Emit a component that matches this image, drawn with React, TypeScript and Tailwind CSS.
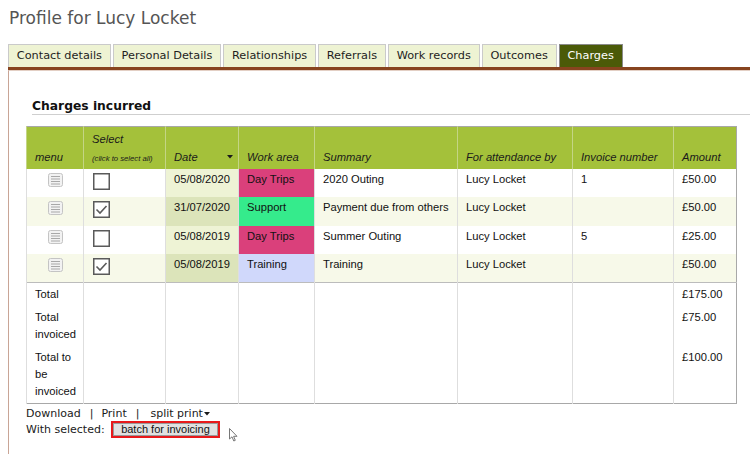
import React from "react";

const tabs = [
  "Contact details",
  "Personal Details",
  "Relationships",
  "Referrals",
  "Work records",
  "Outcomes",
  "Charges",
];

type Row = {
  date: string;
  area: string;
  areaBg: string;
  summary: string;
  by: string;
  inv: string;
  amount: string;
  checked: boolean;
};

const rows: Row[] = [
  { date: "05/08/2020", area: "Day Trips", areaBg: "bg-[#da407b]", summary: "2020 Outing", by: "Lucy Locket", inv: "1", amount: "£50.00", checked: false },
  { date: "31/07/2020", area: "Support", areaBg: "bg-[#35eb8c]", summary: "Payment due from others", by: "Lucy Locket", inv: "", amount: "£50.00", checked: true },
  { date: "05/08/2019", area: "Day Trips", areaBg: "bg-[#da407b]", summary: "Summer Outing", by: "Lucy Locket", inv: "5", amount: "£25.00", checked: false },
  { date: "05/08/2019", area: "Training", areaBg: "bg-[#d0d8fb]", summary: "Training", by: "Lucy Locket", inv: "", amount: "£50.00", checked: true },
];

function MenuIcon() {
  return (
    <svg width="15" height="14" viewBox="0 0 15 14" className="mx-auto block">
      <rect x="0.5" y="0.5" width="14" height="13" rx="2" fill="#f2f2f2" stroke="#c4c4c4" />
      <line x1="3" y1="3.5" x2="12" y2="3.5" stroke="#a8a8a8" />
      <line x1="3" y1="6" x2="12" y2="6" stroke="#a8a8a8" />
      <line x1="3" y1="8.5" x2="12" y2="8.5" stroke="#a8a8a8" />
      <line x1="3" y1="11" x2="12" y2="11" stroke="#a8a8a8" />
    </svg>
  );
}

function Check({ checked }: { checked: boolean }) {
  return (
    <svg width="17" height="17" viewBox="0 0 17 17" className="block">
      <rect x="0.75" y="0.75" width="15.5" height="15.5" fill="#fff" stroke="#5a5a5a" strokeWidth="1.5" />
      {checked && (
        <polyline points="3.5,8.5 7,12 13.5,5" fill="none" stroke="#5a5a5a" strokeWidth="1.6" />
      )}
    </svg>
  );
}

export default function App() {
  const sans = { fontFamily: '"DejaVu Sans", Verdana, sans-serif' };
  const arial = { fontFamily: '"Liberation Sans", Arial, sans-serif' };
  const hd = "border-l border-[#c4d585] align-bottom px-[8px] pb-[5px] italic font-normal text-left text-[#1b1b1b] text-[11.2px] leading-[14px]";
  const td = "border-l border-[#dedede] align-top px-[8px] pt-[3px] text-[11.2px] leading-[14px] text-[#111]";
  const ft = "border-l border-[#dedede] align-top px-[8px] pt-[3px] pb-[3px] text-[11.2px] leading-[17px] text-[#111]";
  return (
    <div className="w-[750px] h-[454px] bg-white overflow-hidden" style={sans}>
      <h1 className="pl-[9px] pt-[7px] text-[17px] leading-[22px] text-[#555] font-normal">
        Profile for Lucy Locket
      </h1>
      <div className="mt-[15px] ml-[8px] flex gap-[2px]">
        {tabs.map((t) =>
          t === "Charges" ? (
            <div
              key={t}
              className="h-[23px] px-[7.8px] flex items-center text-[11.3px] text-white bg-[#4b5a08] border border-b-0 border-[#8a8a8a]"
            >
              {t}
            </div>
          ) : (
            <div
              key={t}
              className="h-[23px] px-[7.8px] flex items-center text-[11.3px] text-[#1e1e1e] bg-[#eef3d3] border border-b-0 border-[#cacaca]"
            >
              {t}
            </div>
          )
        )}
      </div>
      <div className="ml-[8px] border-t-[3px] border-[#87441f]">
        <div className="border-t border-[#e3cfc4] border-l border-l-[#c9a596] h-[384px] pl-[17px]">
          <div className="mt-[27px] ml-[6px] border-b border-[#cfcfcf]">
            <h3 className="text-[12.3px] font-bold leading-[16px] text-[#111]">Charges incurred</h3>
          </div>
          <table
            className="mt-[11px] w-[711px] table-fixed border-collapse border border-[#a8a8a8]"
            style={arial}
          >
            <colgroup>
              <col className="w-[57px]" />
              <col className="w-[82px]" />
              <col className="w-[73px]" />
              <col className="w-[76px]" />
              <col className="w-[143px]" />
              <col className="w-[115px]" />
              <col className="w-[101px]" />
              <col className="w-[63px]" />
            </colgroup>
            <thead>
              <tr className="bg-[#a4c13a] h-[42px]">
                <th className={hd + " text-[10px]"}>menu</th>
                <th className={hd}>
                  <div className="mb-[8px]">Select</div>
                  <div className="text-[7.7px] leading-[10px]">(click to select all)</div>
                </th>
                <th className={hd}>
                  <div className="flex items-center justify-between">
                    <span>Date</span>
                    <svg width="6" height="4" viewBox="0 0 6 4" className="mr-[-3px]">
                      <polygon points="0,0 6,0 3,3.5" fill="#1b1b1b" />
                    </svg>
                  </div>
                </th>
                <th className={hd}>Work area</th>
                <th className={hd}>Summary</th>
                <th className={hd}>For attendance by</th>
                <th className={hd}>Invoice number</th>
                <th className={hd}>Amount</th>
              </tr>
            </thead>
            <tbody>
              {rows.map((r, i) => (
                <tr key={i} className={(i % 2 === 1 ? "bg-[#f7f9e9]" : "bg-white") + " h-[28.5px]"}>
                  <td className="border-l border-[#dedede] align-top pt-[4px]">
                    <MenuIcon />
                  </td>
                  <td className="border-l border-[#dedede] align-top pt-[4px] pl-[9px]">
                    <Check checked={r.checked} />
                  </td>
                  <td className={td + (i % 2 === 1 ? " bg-[#dce4ba]" : " bg-[#eef3d5]")}>{r.date}</td>
                  <td className={td + " " + r.areaBg}>{r.area}</td>
                  <td className={td}>{r.summary}</td>
                  <td className={td}>{r.by}</td>
                  <td className={td}>{r.inv}</td>
                  <td className={td}>{r.amount}</td>
                </tr>
              ))}
            </tbody>
            <tfoot className="border-t border-[#bcbcbc]">
              <tr>
                <td className={ft}>Total</td>
                <td className={ft}></td>
                <td className={ft}></td>
                <td className={ft}></td>
                <td className={ft}></td>
                <td className={ft}></td>
                <td className={ft}></td>
                <td className={ft}>£175.00</td>
              </tr>
              <tr>
                <td className={ft}>Total invoiced</td>
                <td className={ft}></td>
                <td className={ft}></td>
                <td className={ft}></td>
                <td className={ft}></td>
                <td className={ft}></td>
                <td className={ft}></td>
                <td className={ft}>£75.00</td>
              </tr>
              <tr>
                <td className={ft}>Total to be invoiced</td>
                <td className={ft}></td>
                <td className={ft}></td>
                <td className={ft}></td>
                <td className={ft}></td>
                <td className={ft}></td>
                <td className={ft}></td>
                <td className={ft}>£100.00</td>
              </tr>
            </tfoot>
          </table>
          <div className="mt-[2px] text-[11px] leading-[15px] text-[#1a1a1a] flex items-center">
            <span>Download</span>
            <span className="ml-[9px]">|</span>
            <span className="ml-[8px]">Print</span>
            <span className="ml-[9px]">|</span>
            <span className="ml-[11px]">split print</span>
            <svg width="6" height="4" viewBox="0 0 6 4" className="ml-[1px]">
              <polygon points="0,0 6,0 3,3.5" fill="#1a1a1a" />
            </svg>
          </div>
          <div className="text-[11px] leading-[15px] text-[#1a1a1a] flex items-center">
            <span>With selected:</span>
            <div className="ml-[6px] border-2 border-[#e8191b]">
              <div
                className="bg-[#e1e1e1] border border-[#9a9a9a] px-[7.5px] h-[13px] flex items-center text-[11px] text-[#111]"
                style={arial}
              >
                batch for invoicing
              </div>
            </div>
            <svg width="9" height="14" viewBox="0 0 9 14" className="ml-[9px] relative top-[5px]">
              <path d="M0.5,0.5 L0.5,11 L3,8.8 L4.8,13 L6.3,12.3 L4.6,8.3 L8,8.3 Z" fill="#fff" stroke="#777" strokeWidth="1" />
            </svg>
          </div>
        </div>
      </div>
    </div>
  );
}
